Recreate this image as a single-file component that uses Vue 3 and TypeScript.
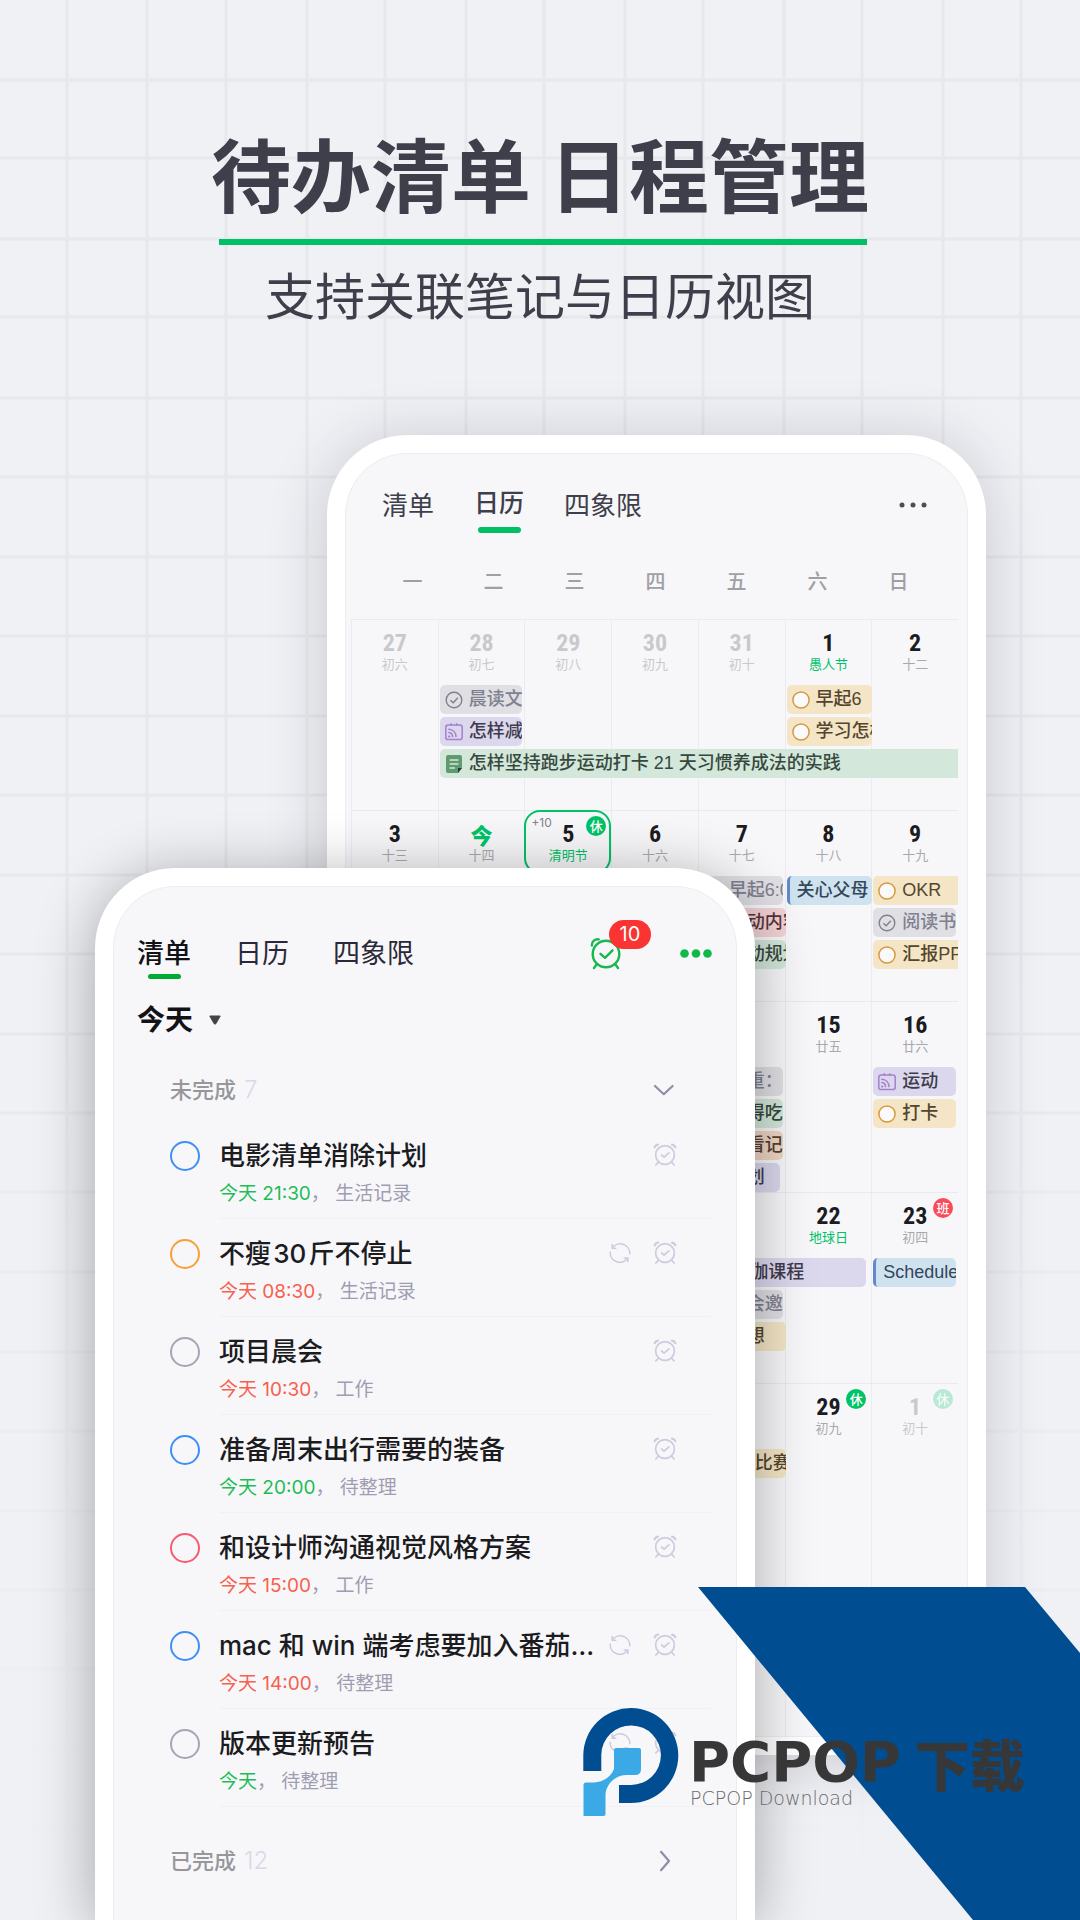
<script setup lang="ts">
type Tone = 'grey' | 'purple' | 'green' | 'yellow' | 'pink' | 'blue' | 'orange'
type Mark = 'done' | 'ring' | 'feed' | 'note' | 'bar'
type End = 'inset' | 'flush' | 'cut' | 'short'

interface Day {
  num: string
  lunar: string
  muted?: boolean
  festival?: boolean
  today?: boolean
  selected?: boolean
  more?: string
  tag?: 'rest' | 'work'
}

interface CalendarEvent {
  text: string
  col: number
  row: number
  span?: number
  tone: Tone
  mark: Mark
  end: End
}

interface Week {
  days: Day[]
  events: CalendarEvent[]
}

interface Task {
  title: string
  when: string
  late: boolean
  list: string
  color: string
  repeat?: boolean
}

const columnLines = [67, 147, 226, 307, 385, 466, 544, 625, 703, 784, 862, 943, 1021]
const rowLines = [
  80, 158, 239, 317, 398, 477, 557, 636, 716, 795, 875, 954, 1034, 1113, 1192, 1272, 1352, 1431,
  1511, 1590, 1669, 1749, 1829,
]

const weekdays = ['一', '二', '三', '四', '五', '六', '日']

const weeks: Week[] = [
  {
    days: [
      { num: '27', lunar: '初六', muted: true },
      { num: '28', lunar: '初七', muted: true },
      { num: '29', lunar: '初八', muted: true },
      { num: '30', lunar: '初九', muted: true },
      { num: '31', lunar: '初十', muted: true },
      { num: '1', lunar: '愚人节', festival: true },
      { num: '2', lunar: '十二' },
    ],
    events: [
      { text: '晨读文', col: 2, row: 1, tone: 'grey', mark: 'done', end: 'inset' },
      { text: '怎样减', col: 2, row: 2, tone: 'purple', mark: 'feed', end: 'inset' },
      { text: '早起6', col: 6, row: 1, tone: 'yellow', mark: 'ring', end: 'flush' },
      { text: '学习怎样', col: 6, row: 2, tone: 'yellow', mark: 'ring', end: 'flush' },
      { text: '怎样坚持跑步运动打卡 21 天习惯养成法的实践', col: 2, row: 3, span: 6, tone: 'green', mark: 'note', end: 'cut' },
    ],
  },
  {
    days: [
      { num: '3', lunar: '十三' },
      { num: '今', lunar: '十四', today: true },
      { num: '5', lunar: '清明节', festival: true, selected: true, more: '+10', tag: 'rest' },
      { num: '6', lunar: '十六' },
      { num: '7', lunar: '十七' },
      { num: '8', lunar: '十八' },
      { num: '9', lunar: '十九' },
    ],
    events: [
      { text: '早起6:00', col: 5, row: 1, tone: 'grey', mark: 'done', end: 'inset' },
      { text: '运动内容', col: 5, row: 2, tone: 'pink', mark: 'ring', end: 'flush' },
      { text: '运动规划', col: 5, row: 3, tone: 'green', mark: 'note', end: 'flush' },
      { text: '关心父母', col: 6, row: 1, tone: 'blue', mark: 'bar', end: 'flush' },
      { text: 'OKR', col: 7, row: 1, tone: 'yellow', mark: 'ring', end: 'cut' },
      { text: '阅读书', col: 7, row: 2, tone: 'grey', mark: 'done', end: 'inset' },
      { text: '汇报PPT', col: 7, row: 3, tone: 'yellow', mark: 'ring', end: 'cut' },
    ],
  },
  {
    days: [
      { num: '10', lunar: '二十' },
      { num: '11', lunar: '廿一' },
      { num: '12', lunar: '廿二' },
      { num: '13', lunar: '廿三' },
      { num: '14', lunar: '廿四' },
      { num: '15', lunar: '廿五' },
      { num: '16', lunar: '廿六' },
    ],
    events: [
      { text: '体重：50', col: 5, row: 1, tone: 'grey', mark: 'done', end: 'inset' },
      { text: '值得吃', col: 5, row: 2, tone: 'green', mark: 'note', end: 'inset' },
      { text: '观看记录', col: 5, row: 3, tone: 'orange', mark: 'ring', end: 'inset' },
      { text: '计划', col: 5, row: 4, tone: 'purple', mark: 'feed', end: 'short' },
      { text: '运动', col: 7, row: 1, tone: 'purple', mark: 'feed', end: 'inset' },
      { text: '打卡', col: 7, row: 2, tone: 'yellow', mark: 'ring', end: 'inset' },
    ],
  },
  {
    days: [
      { num: '17', lunar: '廿七' },
      { num: '18', lunar: '廿八' },
      { num: '19', lunar: '廿九' },
      { num: '20', lunar: '初一' },
      { num: '21', lunar: '初二' },
      { num: '22', lunar: '地球日', festival: true },
      { num: '23', lunar: '初四', tag: 'work' },
    ],
    events: [
      { text: '每周五晚上瑜伽课程', col: 4, row: 1, span: 3, tone: 'purple', mark: 'feed', end: 'short' },
      { text: '年会邀请', col: 5, row: 2, tone: 'grey', mark: 'done', end: 'inset' },
      { text: '感想', col: 5, row: 3, tone: 'yellow', mark: 'ring', end: 'flush' },
      { text: 'Schedule', col: 7, row: 1, tone: 'blue', mark: 'bar', end: 'inset' },
    ],
  },
  {
    days: [
      { num: '24', lunar: '初五' },
      { num: '25', lunar: '初六' },
      { num: '26', lunar: '初七' },
      { num: '27', lunar: '初七' },
      { num: '28', lunar: '初八' },
      { num: '29', lunar: '初九', tag: 'rest' },
      { num: '1', lunar: '初十', muted: true, tag: 'rest' },
    ],
    events: [{ text: 'F1 比赛', col: 5, row: 1, tone: 'yellow', mark: 'ring', end: 'flush' }],
  },
]

const tasks: Task[] = [
  { title: '电影清单消除计划', when: '今天 21:30', late: false, list: '生活记录', color: '#3f8ff7' },
  { title: '不瘦\u200a30\u200a斤不停止', when: '今天 08:30', late: true, list: '生活记录', color: '#f99f38', repeat: true },
  { title: '项目晨会', when: '今天 10:30', late: true, list: '工作', color: '#a6a4b6' },
  { title: '准备周末出行需要的装备', when: '今天 20:00', late: false, list: '待整理', color: '#3f8ff7' },
  { title: '和设计师沟通视觉风格方案', when: '今天 15:00', late: true, list: '工作', color: '#f85a6e' },
  { title: 'mac 和 win 端考虑要加入番茄钟功能', when: '今天 14:00', late: true, list: '待整理', color: '#3f8ff7', repeat: true },
  { title: '版本更新预告', when: '今天', late: false, list: '待整理', color: '#a6a4b6', repeat: true },
]
</script>

<template>
  <main class="page">
    <svg class="paper" viewBox="0 0 1080 1920" preserveAspectRatio="xMidYMin slice" aria-hidden="true">
      <path v-for="x in columnLines" :key="'c' + x" :d="`M${x} 0V1920`" />
      <path v-for="y in rowLines" :key="'r' + y" :d="`M0 ${y}H1080`" />
    </svg>

    <header class="hero">
      <h1>待办清单 日程管理</h1>
      <div class="rule"></div>
      <p>支持关联笔记与日历视图</p>
    </header>

    <div class="stage">
      <section class="phone phone-back">
        <div class="screen">
          <div class="topbar back-top">
            <nav class="tabs">
              <button type="button">清单</button>
              <button type="button" class="active">日历</button>
              <button type="button">四象限</button>
            </nav>
            <button type="button" class="more" aria-label="更多">
              <svg width="28" height="36" viewBox="0 0 28 36" fill="#4e4d55">
                <circle cx="3" cy="17" r="2.5" /><circle cx="14" cy="17" r="2.5" /><circle cx="25" cy="17" r="2.5" />
              </svg>
            </button>
          </div>

          <div class="weekdays">
            <span v-for="d in weekdays" :key="d">{{ d }}</span>
          </div>

          <div class="calendar">
            <div v-for="(week, w) in weeks" :key="w" class="week">
              <div
                v-for="(day, i) in week.days"
                :key="day.num"
                class="day"
                :class="{ muted: day.muted, festival: day.festival, today: day.today }"
                :style="{ gridColumn: i + 1 }"
              >
                <div v-if="day.selected" class="selection"></div>
                <span class="num">{{ day.num }}</span>
                <span class="lunar">{{ day.lunar }}</span>
                <span v-if="day.more" class="extra">{{ day.more }}</span>
                <span v-if="day.tag" class="tag" :class="day.tag">{{ day.tag === 'rest' ? '休' : '班' }}</span>
              </div>
              <div
                v-for="ev in week.events"
                :key="ev.text"
                class="event"
                :class="[ev.tone, ev.end, 'mark-' + ev.mark]"
                :style="{ gridColumn: `${ev.col} / span ${ev.span ?? 1}`, gridRow: ev.row + 1 }"
              >
                <svg v-if="ev.mark === 'done'" width="18" height="18" viewBox="0 0 18 18" fill="none" stroke="#80808f" stroke-width="1.4">
                  <circle cx="9" cy="9" r="7.8" /><path d="M5.4 9.2 8.2 11.8 12.8 6.8" />
                </svg>
                <svg v-else-if="ev.mark === 'ring'" width="18" height="18" viewBox="0 0 18 18" fill="#fafafc" stroke="#d9993f" stroke-width="1.5">
                  <circle cx="9" cy="9" r="8.1" />
                </svg>
                <svg v-else-if="ev.mark === 'feed'" width="18" height="18" viewBox="0 0 18 18" fill="none" stroke="#a77fcf" stroke-width="1.5" stroke-linecap="round">
                  <rect x="0.8" y="2" width="16.4" height="14.6" rx="2.4" /><path d="M6.2 0.8V2M11.8 0.8V2M3.8 6.2C8 6.4 10.8 9.4 11 13.6M3.8 9.6C6.2 9.8 7.4 11.2 7.6 13.6" /><path d="M4 13.4h.4" stroke-width="2" />
                </svg>
                <svg v-else-if="ev.mark === 'note'" width="18" height="18" viewBox="0 0 18 18">
                  <path d="M3 0H15A2 2 0 0 1 17 2V13L13 18H3A2 2 0 0 1 1 16V2A2 2 0 0 1 3 0Z" fill="#5f9a70" /><path d="M17 13 13 18V13Z" fill="#24402d" /><path d="M4.600 5H13.400M4.600 9H13.400M4.600 13H10" stroke="#d3e7da" stroke-width="1.5" />
                </svg>
                <span>{{ ev.text }}</span>
              </div>
            </div>
          </div>
        </div>
      </section>

      <section class="phone phone-front">
        <div class="screen">
          <div class="topbar front-top">
            <nav class="tabs">
              <button type="button" class="active">清单</button>
              <button type="button">日历</button>
              <button type="button">四象限</button>
            </nav>
            <div class="actions">
              <button type="button" class="alarm" aria-label="提醒">
                <svg width="34" height="34" viewBox="0 0 34 34" fill="none" stroke="#17b84d" stroke-width="2.4" stroke-linecap="round" stroke-linejoin="round">
                  <circle cx="17" cy="18" r="13.3" />
                  <path d="M2.800 9.500C2.600 5.300 6 2.800 9.800 3.400M7.600 28.400 5 32M26.400 28.400 29 32M11.500 17.800 16 21.800 23.500 14.300" />
                </svg>
                <span class="badge">10</span>
              </button>
              <button type="button" aria-label="更多">
                <svg width="32" height="34" viewBox="0 0 32 34" fill="#10b94a">
                  <circle cx="4.500" cy="17.500" r="4.300" /><circle cx="16" cy="17.500" r="4.300" /><circle cx="27.500" cy="17.500" r="4.300" />
                </svg>
              </button>
            </div>
          </div>

          <button type="button" class="range">
            今天
            <svg width="12" height="10" viewBox="0 0 12 10"><path d="M.8 1H11.200L7 8.600Q6 9.600 5 8.600Z" fill="#444" stroke="#444" stroke-linejoin="round" /></svg>
          </button>

          <button type="button" class="group">
            <span class="caption">未完成 <b>7</b></span>
            <svg width="24" height="24" viewBox="0 0 24 24" fill="none" stroke="#918da6" stroke-width="2.2" stroke-linecap="round" stroke-linejoin="round"><path d="M2 8 10.800 16.200 19.600 8" /></svg>
          </button>

          <ul class="tasks">
            <li v-for="(task, i) in tasks" :key="i">
              <input :id="'task' + i" type="checkbox" :style="{ borderColor: task.color }" />
              <div class="body">
                <label :for="'task' + i">
                  <span class="title">{{ task.title }}</span>
                  <span class="meta"><span :class="task.late ? 'late' : 'due'">{{ task.when }}</span>， {{ task.list }}</span>
                </label>
                <div class="icons">
                  <svg v-if="task.repeat" width="24" height="24" viewBox="0 0 24 24" fill="none" stroke="#cfcbdf" stroke-width="1.6" stroke-linecap="round" stroke-linejoin="round">
                    <path d="M4.200 3.600V7.200H7.800M4.200 7.200A9.600 9.600 0 0 1 21.800 12.800M19.800 20.600V17H16.200M19.800 17A9.600 9.600 0 0 1 2.200 11.400" />
                  </svg>
                  <svg width="24" height="24" viewBox="0 0 24 24" fill="none" stroke="#cfcbdf" stroke-width="1.7" stroke-linecap="round" stroke-linejoin="round">
                    <circle cx="12" cy="12" r="9.400" /><path d="M5.600 19.200 2.800 22M18.400 19.200 21.200 22M8.600 12 11 14.200 16 9.800" /><path d="M1.600 4.200C2.200 2.800 3.400 1.800 5 1.600M22.400 4.200C21.800 2.800 20.600 1.800 19 1.600" stroke-width="2.200" />
                  </svg>
                </div>
              </div>
            </li>
          </ul>

          <button type="button" class="group closed">
            <span class="caption">已完成 <b>12</b></span>
            <svg width="24" height="24" viewBox="0 0 24 24" fill="none" stroke="#918da6" stroke-width="2.200" stroke-linecap="round" stroke-linejoin="round"><path d="M8 2.800 16 12 8 21.200" /></svg>
          </button>
        </div>
      </section>
    </div>

    <aside class="brand">
      <svg class="ribbon" width="382" height="333" viewBox="0 0 382 333" aria-hidden="true">
        <path d="M0 0H327L382 66V333H275Z" fill="#004e91" />
      </svg>
      <svg class="logo" width="96" height="109" viewBox="0 0 96 109" aria-hidden="true">
        <path d="M0.300 64V47.700A47.500 47.500 0 1 1 47.800 96H36V78H47.800A29.800 29.800 0 1 0 18.300 47.700V64Z" fill="#004e91" />
        <path d="M33 41H56Q58 41 58 43V62Q58 68 52 68H44C32 68 23 77 22.500 88V107Q22.500 109 20.500 109H.5V78Q.5 75.500 3 75.500H11C20 75 28 70 31 62V43Q31 41 33 41Z" fill="#3ba9e5" />
      </svg>
      <div class="wordmark">
        <div class="name"><span class="latin">PCPOP</span><span>下载</span></div>
        <div class="sub">PCPOP Download</div>
      </div>
    </aside>
  </main>
</template>

<style>
body {
  margin: 0;
}
</style>

<style scoped>
.page {
  position: relative;
  display: flex;
  flex-direction: column;
  min-height: 100vh;
  overflow: hidden;
  background: #f0f1f5;
  color: #3f3e4b;
  font-family: Inter, 'Noto Sans CJK SC', sans-serif;
}

.paper {
  position: absolute;
  inset: 0;
  width: 100%;
  height: 100%;
  stroke: #e7e8ec;
  stroke-width: 3;
  mask-image: linear-gradient(#000 50%, transparent 98%);
}

button {
  margin: 0;
  padding: 0;
  border: 0;
  background: none;
  color: inherit;
  font: inherit;
}

svg {
  display: block;
  flex: none;
}

.hero {
  position: relative;
  display: flex;
  flex-direction: column;
  align-items: center;
  padding-top: 123px;
}

.hero h1 {
  margin: 0;
  font: 700 80px/96px 'Noto Sans CJK SC', sans-serif;
}

.rule {
  width: 60%;
  height: 6px;
  margin: 20px 0 0 6px;
  background: #00c067;
}

.hero p {
  margin: 18px 0 0;
  font: 400 50px/60px 'Noto Sans CJK SC', sans-serif;
}

.stage {
  position: relative;
  flex: 1;
  display: grid;
  grid-template-columns: 95fr 232fr 428fr 231fr 94fr;
  margin-top: 112px;
}

.phone {
  display: flex;
  flex-direction: column;
  box-sizing: border-box;
  min-width: 0;
  border-radius: 80px;
  padding: 19px;
  background: #fff;
}

.phone-back {
  z-index: 0;
  grid-area: 1 / 3 / 2 / 5;
  align-self: start;
  box-shadow: 0 4px 60px rgba(40, 42, 60, 0.2);
}

.phone-front {
  z-index: 1;
  grid-area: 1 / 2 / 2 / 4;
  margin-top: 433px;
  padding-bottom: 0;
  border-radius: 80px 80px 0 0;
  box-shadow: 0 8px 60px rgba(0, 0, 0, 0.32);
}

.screen {
  flex: 1;
  border-radius: 61px;
  overflow: hidden;
  background: #f7f7fa;
  box-shadow: 0 0 0 1px #ededf0;
}

.phone-front .screen {
  border-radius: 61px 61px 0 0;
}

.topbar {
  display: flex;
  justify-content: space-between;
  align-items: flex-start;
}

.tabs {
  display: flex;
  align-items: flex-start;
}

.tabs button {
  display: flex;
  flex-direction: column;
  align-items: center;
}

.back-top {
  height: 45px;
  padding: 34px 40px 0 36px;
}

.back-top .tabs {
  gap: 40px;
  font-size: 26px;
  line-height: 36px;
}

.back-top .active {
  font-size: 25px;
  font-weight: 500;
  line-height: 30px;
}

.back-top .active::after {
  content: '';
  width: 43px;
  height: 6px;
  margin-top: 9px;
  border-radius: 3px;
  background: #00bf65;
}

.weekdays {
  display: grid;
  grid-template-columns: repeat(7, 1fr);
  margin-top: 37px;
  padding: 0 28px 0 26px;
  color: #a0a0a4;
  font-size: 20px;
  font-weight: 500;
  line-height: 24px;
  text-align: center;
}

.calendar {
  margin: 25px 9px 0 5px;
}

.week {
  display: grid;
  grid-template-columns: repeat(7, minmax(0, 1fr));
  grid-template-rows: 62px repeat(4, 29px);
  row-gap: 3px;
  border-top: 1px solid #e9e9ef;
}

.week:last-child {
  grid-template-rows: 62px repeat(4, 29px) 159px;
}

.day {
  position: relative;
  grid-row: 1 / -1;
  display: flex;
  flex-direction: column;
  align-items: center;
  padding-top: 10px;
  border-left: 1px solid #ebebf1;
}

.num {
  color: #1b1b22;
  font: 700 24px/26px 'Roboto Condensed', 'Open Sans Condensed', Roboto, sans-serif;
}

.lunar {
  color: #a9a9ac;
  font-size: 13px;
  line-height: 16px;
}

.muted .num,
.muted .lunar {
  color: #c9c9cc;
}

.festival .lunar {
  color: #00c267;
}

.today .num {
  color: #00c267;
  font: 900 22px/26px 'Noto Sans CJK SC', sans-serif;
}

.selection {
  position: absolute;
  inset: -1px 0 auto -1px;
  height: 60px;
  border: 2px solid #00c267;
  border-radius: 16px;
}

.extra {
  position: absolute;
  top: 4px;
  left: 6px;
  color: #80808c;
  font-size: 12px;
  line-height: 16px;
}

.tag {
  position: absolute;
  top: 5px;
  right: 5px;
  width: 20px;
  height: 20px;
  border-radius: 50%;
  background: #00c267;
  color: #fff;
  font-size: 13px;
  font-weight: 500;
  line-height: 20px;
  text-align: center;
}

.tag.work {
  background: #fa4b5c;
}

.muted .tag {
  opacity: 0.25;
}

.event {
  position: relative;
  display: flex;
  align-items: center;
  gap: 6px;
  margin: 0 2px;
  padding-left: 5px;
  border-radius: 5px;
  overflow: hidden;
  font-family: 'Liberation Sans', 'Noto Sans CJK SC', sans-serif;
  font-size: 18px;
  font-weight: 500;
  line-height: 29px;
  white-space: nowrap;
}

.event.flush {
  margin-right: -1px;
}

.event.short {
  margin-right: 5px;
}

.event.cut {
  margin-right: 0;
  border-radius: 5px 0 0 5px;
}

.mark-bar {
  padding-left: 7px;
  border-left: 3px solid #6389cb;
}

.grey {
  background: #dfdfe4;
  color: #80808f;
}

.purple {
  background: #dbd8ed;
  color: #3f3b4d;
}

.green {
  background: #d3e7da;
  color: #37493e;
}

.yellow {
  background: #f3e5c6;
  color: #54462e;
}

.pink {
  background: #f2d1d4;
  color: #573439;
}

.blue {
  background: #cfe2ef;
  color: #34465a;
}

.orange {
  background: #eed6c3;
  color: #574033;
}

.front-top {
  height: 45px;
  padding: 47px 24px 0 23px;
}

.front-top .tabs {
  gap: 44px;
  color: #2b2938;
  font-size: 27px;
  line-height: 40px;
}

.front-top .active {
  color: #131217;
  font-weight: 500;
}

.front-top .active::after {
  content: '';
  width: 33px;
  height: 5px;
  border-radius: 3px;
  background: #00ab31;
}

.actions {
  display: flex;
  gap: 57px;
  margin-top: 2px;
}

.alarm {
  position: relative;
}

.badge {
  position: absolute;
  top: -16px;
  left: 20px;
  width: 42px;
  height: 29px;
  border-radius: 15px;
  background: #fa3333;
  color: #fff;
  font-size: 20px;
  line-height: 29px;
  text-align: center;
}

.range {
  display: flex;
  align-items: center;
  gap: 16px;
  margin: 21px 0 0 23px;
  color: #131217;
  font-size: 28px;
  font-weight: 700;
  line-height: 40px;
}

.group {
  display: flex;
  justify-content: space-between;
  align-items: center;
  box-sizing: border-box;
  width: 100%;
  margin: 34px 0 15px;
  padding: 0 59px 0 56px;
  color: #97979b;
  font-size: 22px;
  font-weight: 500;
  line-height: 32px;
}

.caption {
  display: flex;
  align-items: baseline;
  gap: 8px;
}

.group b {
  color: #dad7e8;
  font-size: 24px;
  font-weight: 300;
}

.closed {
  margin: 38px 0 43px;
}

.tasks {
  margin: 0 26px 0 56px;
  padding: 0;
  list-style: none;
}

.tasks li {
  display: flex;
  gap: 19px;
}

.tasks input {
  appearance: none;
  flex: none;
  box-sizing: border-box;
  width: 30px;
  height: 30px;
  margin: 20px 0 0;
  border: 2px solid;
  border-radius: 50%;
}

.body {
  flex: 1;
  display: flex;
  align-items: flex-start;
  gap: 12px;
  min-width: 0;
  padding: 17px 33px 9px 0;
  border-bottom: 1px solid #f1f1f4;
}

.body label {
  flex: 1;
  display: flex;
  flex-direction: column;
  gap: 5px;
  min-width: 0;
}

.icons {
  display: flex;
  gap: 21px;
  padding-top: 5px;
}

.title {
  overflow: hidden;
  color: #1c1c1f;
  font-size: 26px;
  font-weight: 500;
  line-height: 36px;
  white-space: nowrap;
  text-overflow: ellipsis;
}

.meta {
  color: #9f9db1;
  font-size: 19px;
  line-height: 30px;
}

.due {
  color: #1fbd56;
}

.late {
  color: #f7604e;
}

.brand {
  position: absolute;
  z-index: 2;
  right: 0;
  bottom: 0;
  display: flex;
  align-items: flex-start;
  gap: 10px;
  box-sizing: border-box;
  width: 497px;
  height: 213px;
}

.ribbon {
  position: absolute;
  right: 0;
  bottom: 0;
}

.logo,
.wordmark {
  position: relative;
}

.wordmark {
  padding-top: 31px;
}

.name {
  display: flex;
  align-items: center;
  gap: 14px;
  color: #373737;
  font: 900 55px/48px 'Noto Sans CJK SC', sans-serif;
}

.name .latin {
  font: 700 56px/48px 'DejaVu Sans', sans-serif;
}

.sub {
  padding-left: 1px;
  color: #6a6a6c;
  font: 200 19px/24px 'DejaVu Sans', sans-serif;
}
</style>
